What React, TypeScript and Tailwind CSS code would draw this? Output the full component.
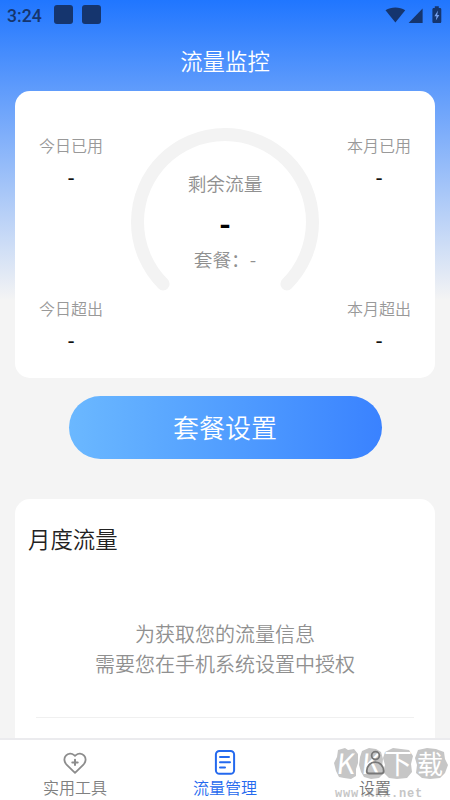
type TStat = { label: string; value: string };

const todayStats: TStat[] = [
    { label: '今日已用', value: '-' },
    { label: '今日超出', value: '-' },
];

const monthStats: TStat[] = [
    { label: '本月已用', value: '-' },
    { label: '本月超出', value: '-' },
];

function StatusBar() {
    return (
        <div className="h-8 flex items-center justify-between pl-[7px] pr-[8px] text-[#15356e]">
            <div className="flex items-center">
                <span className="w-[47px] font-['Roboto',sans-serif] text-[17.6px] leading-8 font-medium">3:24</span>
                <span className="w-[19px] h-[19px] mt-[-3px] rounded-[3px] bg-[#15356e]" />
                <span className="w-[19px] h-[19px] mt-[-3px] ml-[9px] rounded-[3px] bg-[#15356e]" />
            </div>
            <svg className="w-[58px] h-[18px] mt-[-2px]" viewBox="0 0 58 18" fill="currentColor">
                <path d="M1.5 4.3C7.3 0.6 15.5 0.6 21.2 4.3L11.4 16.6Z" />
                <path d="M38.6 2.5V17H24.6Z" />
                <path d="M50.8 0.3H54.8V1.9H56C56.7 1.9 57.3 2.5 57.3 3.3V15.4C57.3 16.3 56.7 17 56 17H49.8C49 17 48.4 16.3 48.4 15.4V3.3C48.4 2.5 49 1.9 49.8 1.9H50.8Z" />
                <path d="M54 4.6L50.4 10.2H52.5L51.8 14.5L55.3 8.9H53.2Z" fill="#75a0f0" />
            </svg>
        </div>
    );
}

function StatColumn({ stats }: { stats: TStat[] }) {
    return (
        <div className="w-[64px] pt-[42px] flex flex-col gap-[107px] text-center">
            {stats.map((stat) => (
                <div key={stat.label} className="h-[56px]">
                    <p className="text-[16px] leading-[24px] font-[350] whitespace-nowrap text-[#999]">{stat.label}</p>
                    <p className="mt-[7px] text-[20px] leading-[26px] font-medium text-[#111]">{stat.value}</p>
                </div>
            ))}
        </div>
    );
}

function Gauge() {
    return (
        <div className="w-[188px] h-[188px] mt-[37px] grid">
            <svg className="col-start-1 row-start-1 w-[188px] h-[188px]" viewBox="0 0 188 188" fill="none">
                <path d="M32.1 155.9A87.5 87.5 0 1 1 155.9 155.9" stroke="#f3f3f3" strokeWidth="13" strokeLinecap="round" />
            </svg>
            <div className="col-start-1 row-start-1 pt-[41px] text-center text-[#909090]">
                <p className="text-[18.7px] leading-[28px] font-[350]">剩余流量</p>
                <p className="mt-[5px] text-[31px] leading-[40px] font-bold text-black">-</p>
                <p className="mt-[3px] text-[18.7px] leading-[28px] font-[350] whitespace-nowrap">套餐：-</p>
            </div>
        </div>
    );
}

function UsageCard() {
    return (
        <section className="mx-[15px] h-[287px] px-[24px] rounded-[15px] bg-white flex justify-between">
            <StatColumn stats={todayStats} />
            <Gauge />
            <StatColumn stats={monthStats} />
        </section>
    );
}

function MonthlyCard() {
    return (
        <section className="mx-[15px] h-[260px] rounded-t-[15px] bg-white">
            <h2 className="pt-[23px] pl-[13px] text-[22.4px] leading-[33px] font-[350] text-[#222]">月度流量</h2>
            <p className="mt-[64px] text-center text-[20px] leading-[30px] font-[350] text-[#909090]">
                为获取您的流量信息
                <br />
                需要您在手机系统设置中授权
            </p>
            <div className="mx-[21px] mt-[38px] h-px bg-[#f0f0f0]" />
        </section>
    );
}

function HeartPlusIcon() {
    return (
        <svg className="w-[26px] h-[26px]" viewBox="0 0 26 26" fill="none" stroke="#8c8c8c" strokeWidth="1.8" strokeLinecap="round" strokeLinejoin="round">
            <path d="M13 23.8L4.8 15.9C2 13.1 1.6 9.2 3.9 6.7C6.1 4.2 9.7 4.1 12.1 6.1L13 6.9L13.9 6.1C16.3 4.1 19.9 4.2 22.1 6.7C24.4 9.2 24 13.1 21.2 15.9Z" />
            <path d="M13 10.7V16.1M10.3 13.4H15.7" strokeWidth="2" />
        </svg>
    );
}

function ListIcon() {
    return (
        <svg className="w-[26px] h-[26px]" viewBox="0 0 26 26" fill="none" stroke="#2469ee" strokeWidth="2" strokeLinecap="round">
            <rect x="3.9" y="2" width="18.2" height="22.8" rx="3.6" />
            <path d="M8 8H17M8 13.2H18M8 18.4H13" />
        </svg>
    );
}

function UserIcon() {
    return (
        <svg className="w-[26px] h-[26px]" viewBox="0 0 26 26" fill="none" stroke="#777" strokeWidth="1.8" strokeLinejoin="round">
            <circle cx="13.5" cy="6.6" r="3.9" />
            <path d="M7.2 24.5C5.5 24.5 4.7 23.6 4.7 22C4.7 17.1 8.2 13.2 13.2 13.2C18.2 13.2 21.7 17.1 21.7 22C21.7 23.6 20.9 24.5 19.2 24.5Z" />
        </svg>
    );
}

const tabs: Array<{ label: string; icon: React.ElementType; color: string }> = [
    { label: '实用工具', icon: HeartPlusIcon, color: 'text-[#808080]' },
    { label: '流量管理', icon: ListIcon, color: 'text-[#2469ee]' },
    { label: '设置', icon: UserIcon, color: 'text-[#777]' },
];

function Watermark() {
    return (
        <div className="absolute left-[333px] top-[7px] w-[117px] h-[54px]">
            <svg className="absolute left-0 top-0 w-[117px] h-[34px]" viewBox="0 0 117 34" fill="#c6c6c6">
                <path d="M5 3L12 1L15 3L21 2L25 7V16L23 22V29L18 32L11 31L6 30L3 24L1 16L4 10Z" />
                <path d="M29 4L36 1L43 2L48 5L50 12L49 20L51 26L46 31L38 32L31 30L28 25L26 18L27 10Z" />
                <path d="M52 5L60 1L68 2L76 3L80 9L78 17L79 25L74 31L64 32L56 31L50 25L52 18L50 11Z" />
                <path d="M85 3L94 1L103 2L111 5L112 12L115 18L112 26L107 31L97 32L89 31L83 26L84 18L82 11Z" />
            </svg>
            <div className="absolute left-[4px] top-0 flex items-center h-[31px] text-white leading-[31px]">
                <span className="w-[25px] text-[28px] -skew-x-6">K</span>
                <span className="w-[22px] text-[28px] -skew-x-6">K</span>
                <span className="w-[33px] text-[28px]">下</span>
                <span className="text-[26px]">载</span>
            </div>
            <p className="absolute left-[2px] top-[39px] font-['Liberation_Mono',monospace] text-[12px] leading-[16px] tracking-[0.8px] font-bold text-[#c6c6c6]">www.kkx.net</p>
        </div>
    );
}

function TabBar() {
    return (
        <nav className="relative h-[62px] border-t-2 border-[#ebebee] bg-white">
            <Watermark />
            <div className="relative flex h-full">
                {tabs.map((tab) => (
                    <div key={tab.label} className={`flex-1 flex flex-col items-center pt-[9px] ${tab.color}`}>
                        <tab.icon />
                        <span className="text-[16px] leading-[24px] font-[350]">{tab.label}</span>
                    </div>
                ))}
            </div>
        </nav>
    );
}

export default function App() {
    return (
        <div className="w-[450px] h-[800px] overflow-hidden flex flex-col bg-[#f4f4f4] font-['Noto_Sans_CJK_SC',sans-serif]">
            <main className="h-[738px] overflow-hidden bg-[linear-gradient(180deg,#2076ff_0px,#f4f4f4_300px)]">
                <StatusBar />
                <h1 className="h-[59px] text-center text-[22.4px] leading-[56px] font-[350] text-white">流量监控</h1>
                <UsageCard />
                <div className="mx-[15px] h-[121px] pt-[18px] flex justify-center items-start">
                    <button className="w-[313px] h-[63px] pb-[2px] rounded-full bg-linear-to-r from-[#6bb8ff] to-[#3a82ff] text-[26px] leading-[61px] font-[350] text-white">
                        套餐设置
                    </button>
                </div>
                <MonthlyCard />
            </main>
            <TabBar />
        </div>
    );
}
